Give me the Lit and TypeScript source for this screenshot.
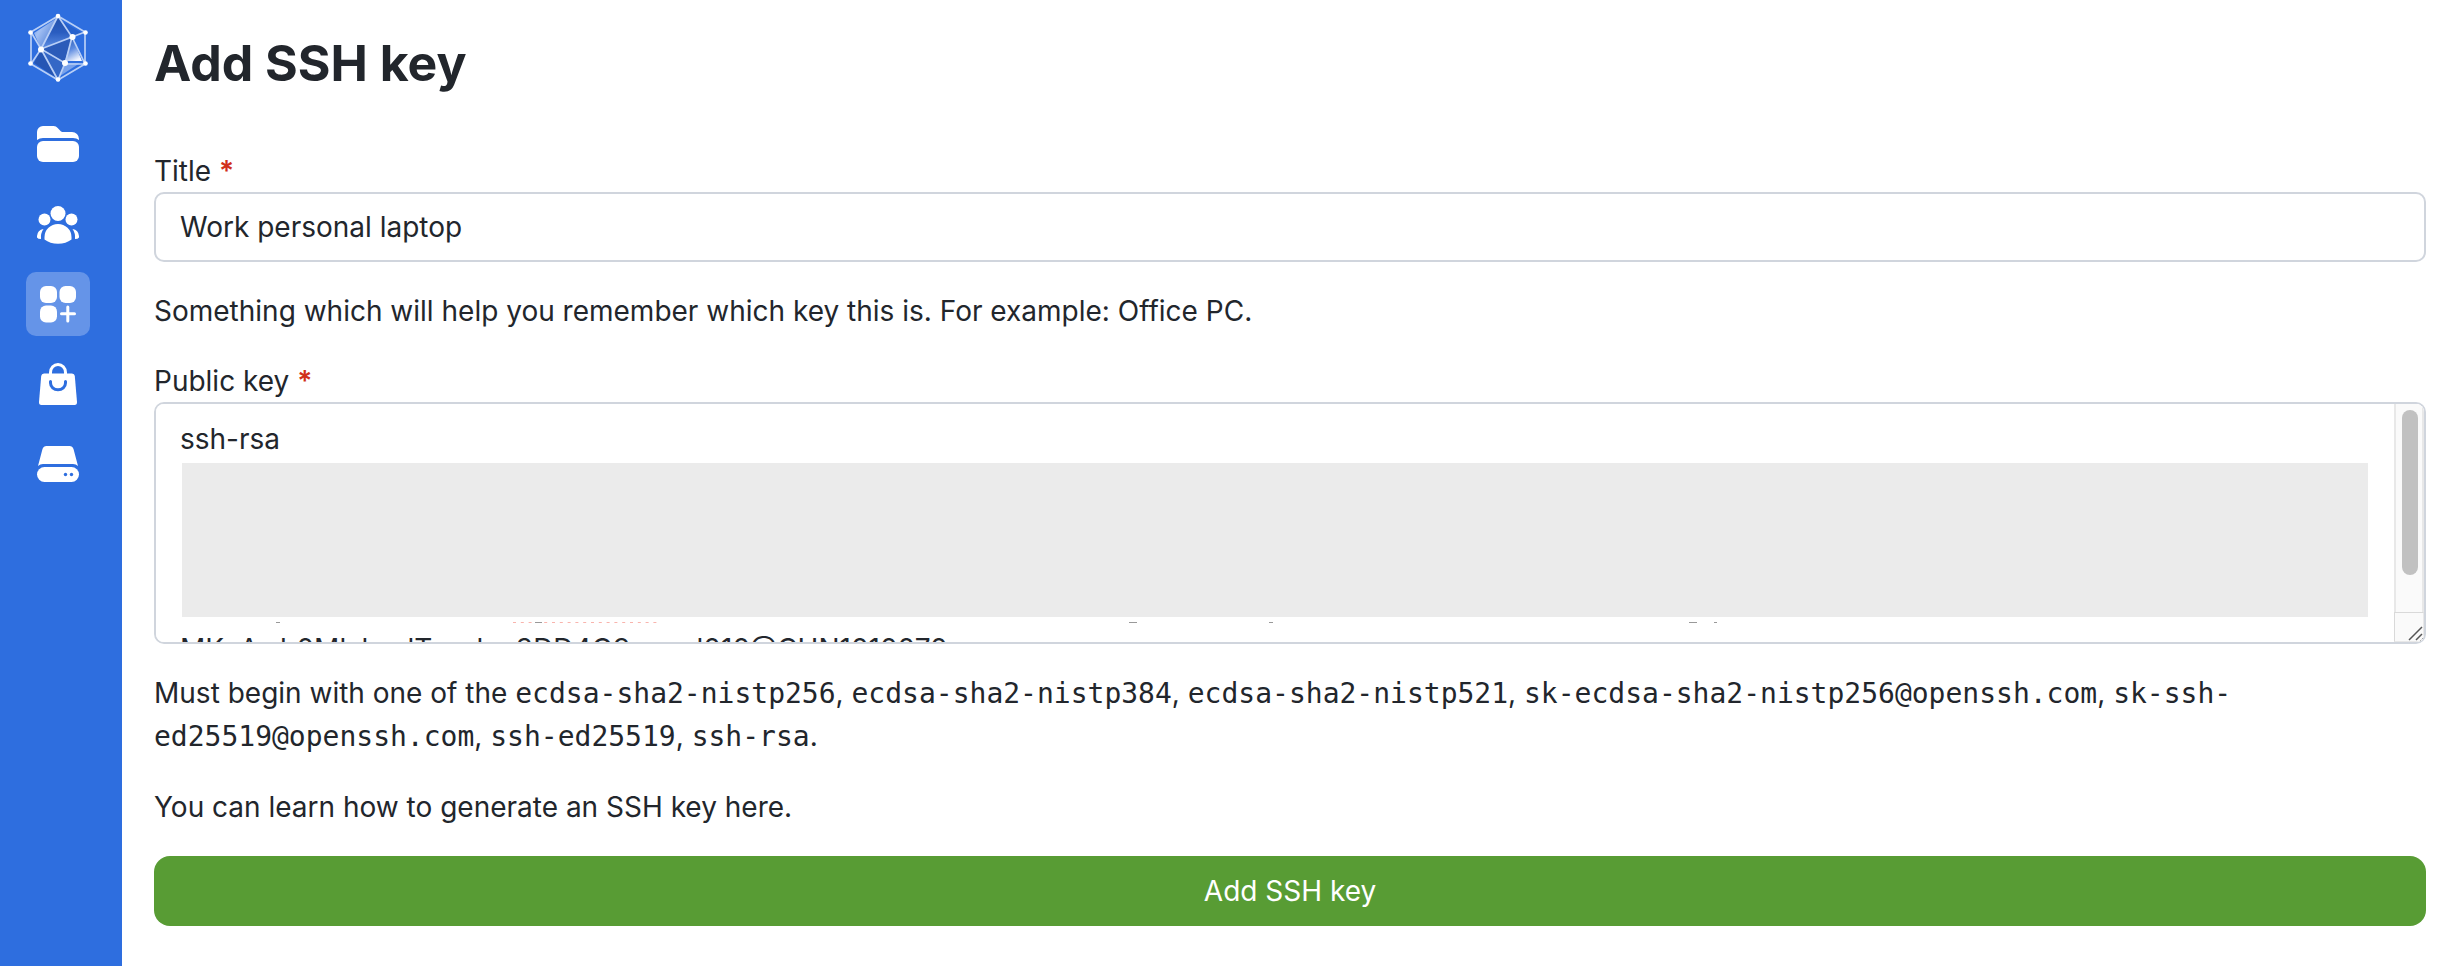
import { LitElement, html, css, svg } from "lit";
import { customElement, state } from "lit/decorators.js";

const KEY_TYPES = [
  "ecdsa-sha2-nistp256",
  "ecdsa-sha2-nistp384",
  "ecdsa-sha2-nistp521",
  "sk-ecdsa-sha2-nistp256@openssh.com",
  "sk-ssh-ed25519@openssh.com",
  "ssh-ed25519",
  "ssh-rsa",
];

const NAV = [
  {
    label: "Projects",
    icon: svg`<path d="M7 20v-8a6 6 0 0 1 6-6h10.500c2 0 3 .8 4.200 2l2.600 2.700c1 1 1.700 1.300 3 1.300H42a7 7 0 0 1 7 7v1q-2.500-2-6-2H13q-3.500 0-6 2z"/><rect x="7" y="21" width="42" height="21" rx="6"/>`,
  },
  {
    label: "Teams",
    icon: svg`<circle cx="28" cy="13.500" r="7.500"/><circle cx="14.500" cy="19.500" r="6"/><circle cx="41.500" cy="19.500" r="6"/><path d="M14.500 39.500v-2.500a13.500 13 0 0 1 27 0v2.500q-5.500 4.200-13.500 4.200t-13.500-4.200zM13.500 29q-3 4-2.500 10-3 0-4-1.500v-1.500q.5-6 6.500-7zM42.500 29q3 4 2.500 10 3 0 4-1.500v-1.500q-.5-6-6.500-7z"/>`,
  },
  {
    label: "Services",
    icon: svg`<rect x="10" y="6" width="17" height="17" rx="6"/><rect x="29.500" y="6" width="16.500" height="17" rx="6"/><rect x="10" y="25.500" width="17" height="17" rx="6"/><path d="M37.800 27v14M31.500 33.700h13" fill="none" stroke="#fff" stroke-width="3" stroke-linecap="round"/>`,
  },
  {
    label: "Marketplace",
    icon: svg`<path d="M14 13.500h28q2.500 0 2.800 2.500l2.200 26q.2 3-2.500 3h-33q-2.700 0-2.500-3l2.200-26q.3-2.500 2.800-2.500z"/><path d="M20.500 15v-2.500a7.500 8 0 0 1 15 0V15" fill="none" stroke="#fff" stroke-width="3"/><path class="cut" d="M20.500 21.500v1.500a7.500 6.800 0 0 0 15 0v-1.500"/>`,
  },
  {
    label: "Servers",
    icon: svg`<path d="M16.500 6h23q3 0 4 3l4.500 17q-2-2-5-2H13q-3 0-5 2l4.500-17q1-3 4-3z"/><rect x="7" y="27" width="42" height="15" rx="7.500"/><g class="dot"><circle cx="35.500" cy="34.500" r="1.700"/><circle cx="41.500" cy="34.500" r="1.700"/></g>`,
  },
];

@customElement("app-nav")
class AppNav extends LitElement {
  static styles = css`
    :host {
      display: block;
      background: #2e6edf;
    }
    nav {
      display: flex;
      flex-direction: column;
      align-items: center;
      gap: 16px;
      padding: 10px 6px 0 0;
    }
    a {
      display: block;
      width: 64px;
      height: 64px;
      border-radius: 10px;
    }
    a.brand {
      height: 86px;
    }
    a.active {
      background: #6594e8;
    }
    svg {
      display: block;
      width: 64px;
      fill: #fff;
    }
    .cut {
      fill: none;
      stroke: #2e6edf;
      stroke-width: 3;
      stroke-linecap: round;
    }
    .dot {
      fill: #2e6edf;
    }
  `;

  render() {
    return html`
      <nav aria-label="Main">
        <a class="brand" href="#" aria-label="Home">
          <svg viewBox="26 10 64 78" height="78">
            <defs>
              <linearGradient id="pale" x1="0" y1="0" x2="1" y2=".8">
                <stop offset="0" stop-color="#5f90ea" />
                <stop offset=".35" stop-color="#a3c0f3" />
                <stop offset="1" stop-color="#3c70d0" />
              </linearGradient>
              <linearGradient id="deep" x1="0" y1="0" x2="0" y2="1">
                <stop offset="0" stop-color="#2351aa" />
                <stop offset=".5" stop-color="#2a5dc0" />
                <stop offset="1" stop-color="#5e8fe5" />
              </linearGradient>
              <linearGradient id="glow" x1=".2" y1="0" x2=".6" y2="1">
                <stop offset="0" stop-color="#2857b0" />
                <stop offset=".5" stop-color="#5d8be0" />
                <stop offset="1" stop-color="#f1f5fe" />
              </linearGradient>
            </defs>
            <path fill="url(#pale)" d="M34 33l23-15-16 31z" />
            <path fill="url(#deep)" d="M58 16l14 21-31 12z" />
            <path fill="#2862cc" d="M60 20l22 13-10 4z" />
            <path fill="#2b5bb9" d="M72 37l-7 26-24-14z" />
            <path fill="url(#glow)" d="M72 37l10 24H65z" />
            <path fill="#2656b4" d="M41 49l17 30-24-16z" />
            <path fill="#3467c6" d="M41 49l24 14-7 16z" />
            <path fill="#79a2eb" d="M65 63h15L60 76z" />
            <path
              fill="none"
              stroke="#b9cff6"
              stroke-width="1.700"
              d="M58 16l27 16v32L58 80 31 64V32zM58 16L41 49l31-12zM31 32l10 17L31 64M72 37l13-5M72 37l13 27H65zM41 49l24 14-7 17zM41 49l17 31"
            />
            <circle cx="58" cy="16" r="2.300" /><circle cx="85.500" cy="32.500" r="2.300" />
            <circle cx="85.500" cy="63.500" r="2.300" /><circle cx="58" cy="79.500" r="2.300" />
            <circle cx="30.500" cy="63.500" r="2.300" /><circle cx="30.500" cy="32.500" r="2.300" />
            <circle cx="41" cy="49.500" r="3" /><circle cx="72.500" cy="37" r="3" />
            <circle cx="65" cy="63" r="3" />
          </svg>
        </a>
        ${NAV.map(
          (item) => html`
            <a href="#" class=${item.label === "Services" ? "active" : ""} aria-label=${item.label}>
              <svg viewBox="-4 -8 64 64" height="64">${item.icon}</svg>
            </a>
          `
        )}
      </nav>
    `;
  }
}

@customElement("app-root")
class AppRoot extends LitElement {
  static styles = css`
    :host {
      display: grid;
      grid-template-columns: 122px 1fr;
      min-height: 100vh;
      background: #fff;
      color: #22262c;
      font: 28px/42px Inter, sans-serif;
    }
    * {
      box-sizing: border-box;
    }
    main {
      min-width: 0;
      padding: 32px 24px 40px 32px;
    }
    h1 {
      margin: 0 0 56px;
      font-size: 50px;
      line-height: 62px;
      font-weight: 700;
    }
    label {
      display: block;
    }
    .required {
      color: #d12f19;
      font-weight: 600;
    }
    p {
      margin: 0;
      padding: 28px 0;
    }
    .keys {
      padding: 28px 0 0;
    }
    code {
      font-family: "DejaVu Sans Mono", monospace;
    }
    input,
    textarea {
      display: block;
      width: 100%;
      margin: 0;
      border: 2px solid #d0d5dd;
      border-radius: 10px;
      padding: 12px 24px;
      background: #fff;
      color: inherit;
      font: inherit;
      outline: none;
    }
    input {
      height: 70px;
    }
    .area {
      position: relative;
    }
    textarea {
      height: 242px;
      padding-top: 14px;
      resize: vertical;
      overflow-y: scroll;
      scrollbar-width: none;
    }
    .redaction {
      position: absolute;
      top: 61px;
      left: 28px;
      right: 58px;
      height: 154px;
      background: #ebebeb;
    }
    .remnants {
      position: absolute;
      top: 100%;
      left: 0;
      width: 100%;
      height: 8px;
      fill: none;
    }
    .scrollbar {
      position: absolute;
      top: 2px;
      right: 2px;
      bottom: 2px;
      width: 30px;
      display: flex;
      flex-direction: column;
      overflow: hidden;
      border-radius: 0 8px 8px 0;
      background: #fafafa;
      pointer-events: none;
    }
    .track {
      flex: 1;
      border: 0 solid #e8e8e8;
      border-width: 0 2px;
      padding: 6px 4px 37px 6px;
    }
    .thumb {
      height: 100%;
      border-radius: 8px;
      background: #c1c1c1;
    }
    .grip {
      display: block;
      width: 30px;
      height: 30px;
      border: 1px solid #d9d9d9;
      border-right-color: #e8e8e8;
      border-bottom-color: #e8e8e8;
      fill: none;
      stroke: #555;
      stroke-width: 1.5;
    }
    button {
      display: block;
      width: 100%;
      height: 70px;
      border: 0;
      border-radius: 16px;
      background: #589c34;
      color: #fff;
      font: inherit;
    }
  `;

  @state() private name = "Work personal laptop";
  @state() private key = "ssh-rsa\n\n\n\n\nMKzAwh0MlxkxxlTxxxhw3DD4Q9nnnnl010@CHN1010070";

  render() {
    return html`
      <app-nav></app-nav>
      <main>
        <h1>Add SSH key</h1>
        <form @submit=${(e: Event) => e.preventDefault()}>
          <label for="title">Title <span class="required">*</span></label>
          <input id="title" type="text" required .value=${this.name} />
          <p>Something which will help you remember which key this is. For example: Office PC.</p>
          <label for="key">Public key <span class="required">*</span></label>
          <div class="area">
            <textarea id="key" required spellcheck="false" .value=${this.key}></textarea>
            <div class="redaction">
              <svg class="remnants" aria-hidden="true">
                <path stroke="#f9b4ad" stroke-dasharray="3 4.800" d="M331 5.500h145" />
                <path stroke="#999" d="M94 5.500h4M353 5.500h7M947 5.500h8M1087 5.500h4M1507 5.500h8M1532 5.500h3" />
              </svg>
            </div>
            <div class="scrollbar" aria-hidden="true">
              <div class="track"><div class="thumb"></div></div>
              <svg class="grip" viewBox="0 0 28 28"><path d="M14 27L27 14M21 27l6-6" /></svg>
            </div>
          </div>
          <p class="keys">
            Must begin with one of the
            ${KEY_TYPES.map((k, i) => html`${i ? ", " : ""}<code>${k}</code>`)}.
          </p>
          <p>You can learn how to generate an SSH key here.</p>
          <button type="submit">Add SSH key</button>
        </form>
      </main>
    `;
  }
}
